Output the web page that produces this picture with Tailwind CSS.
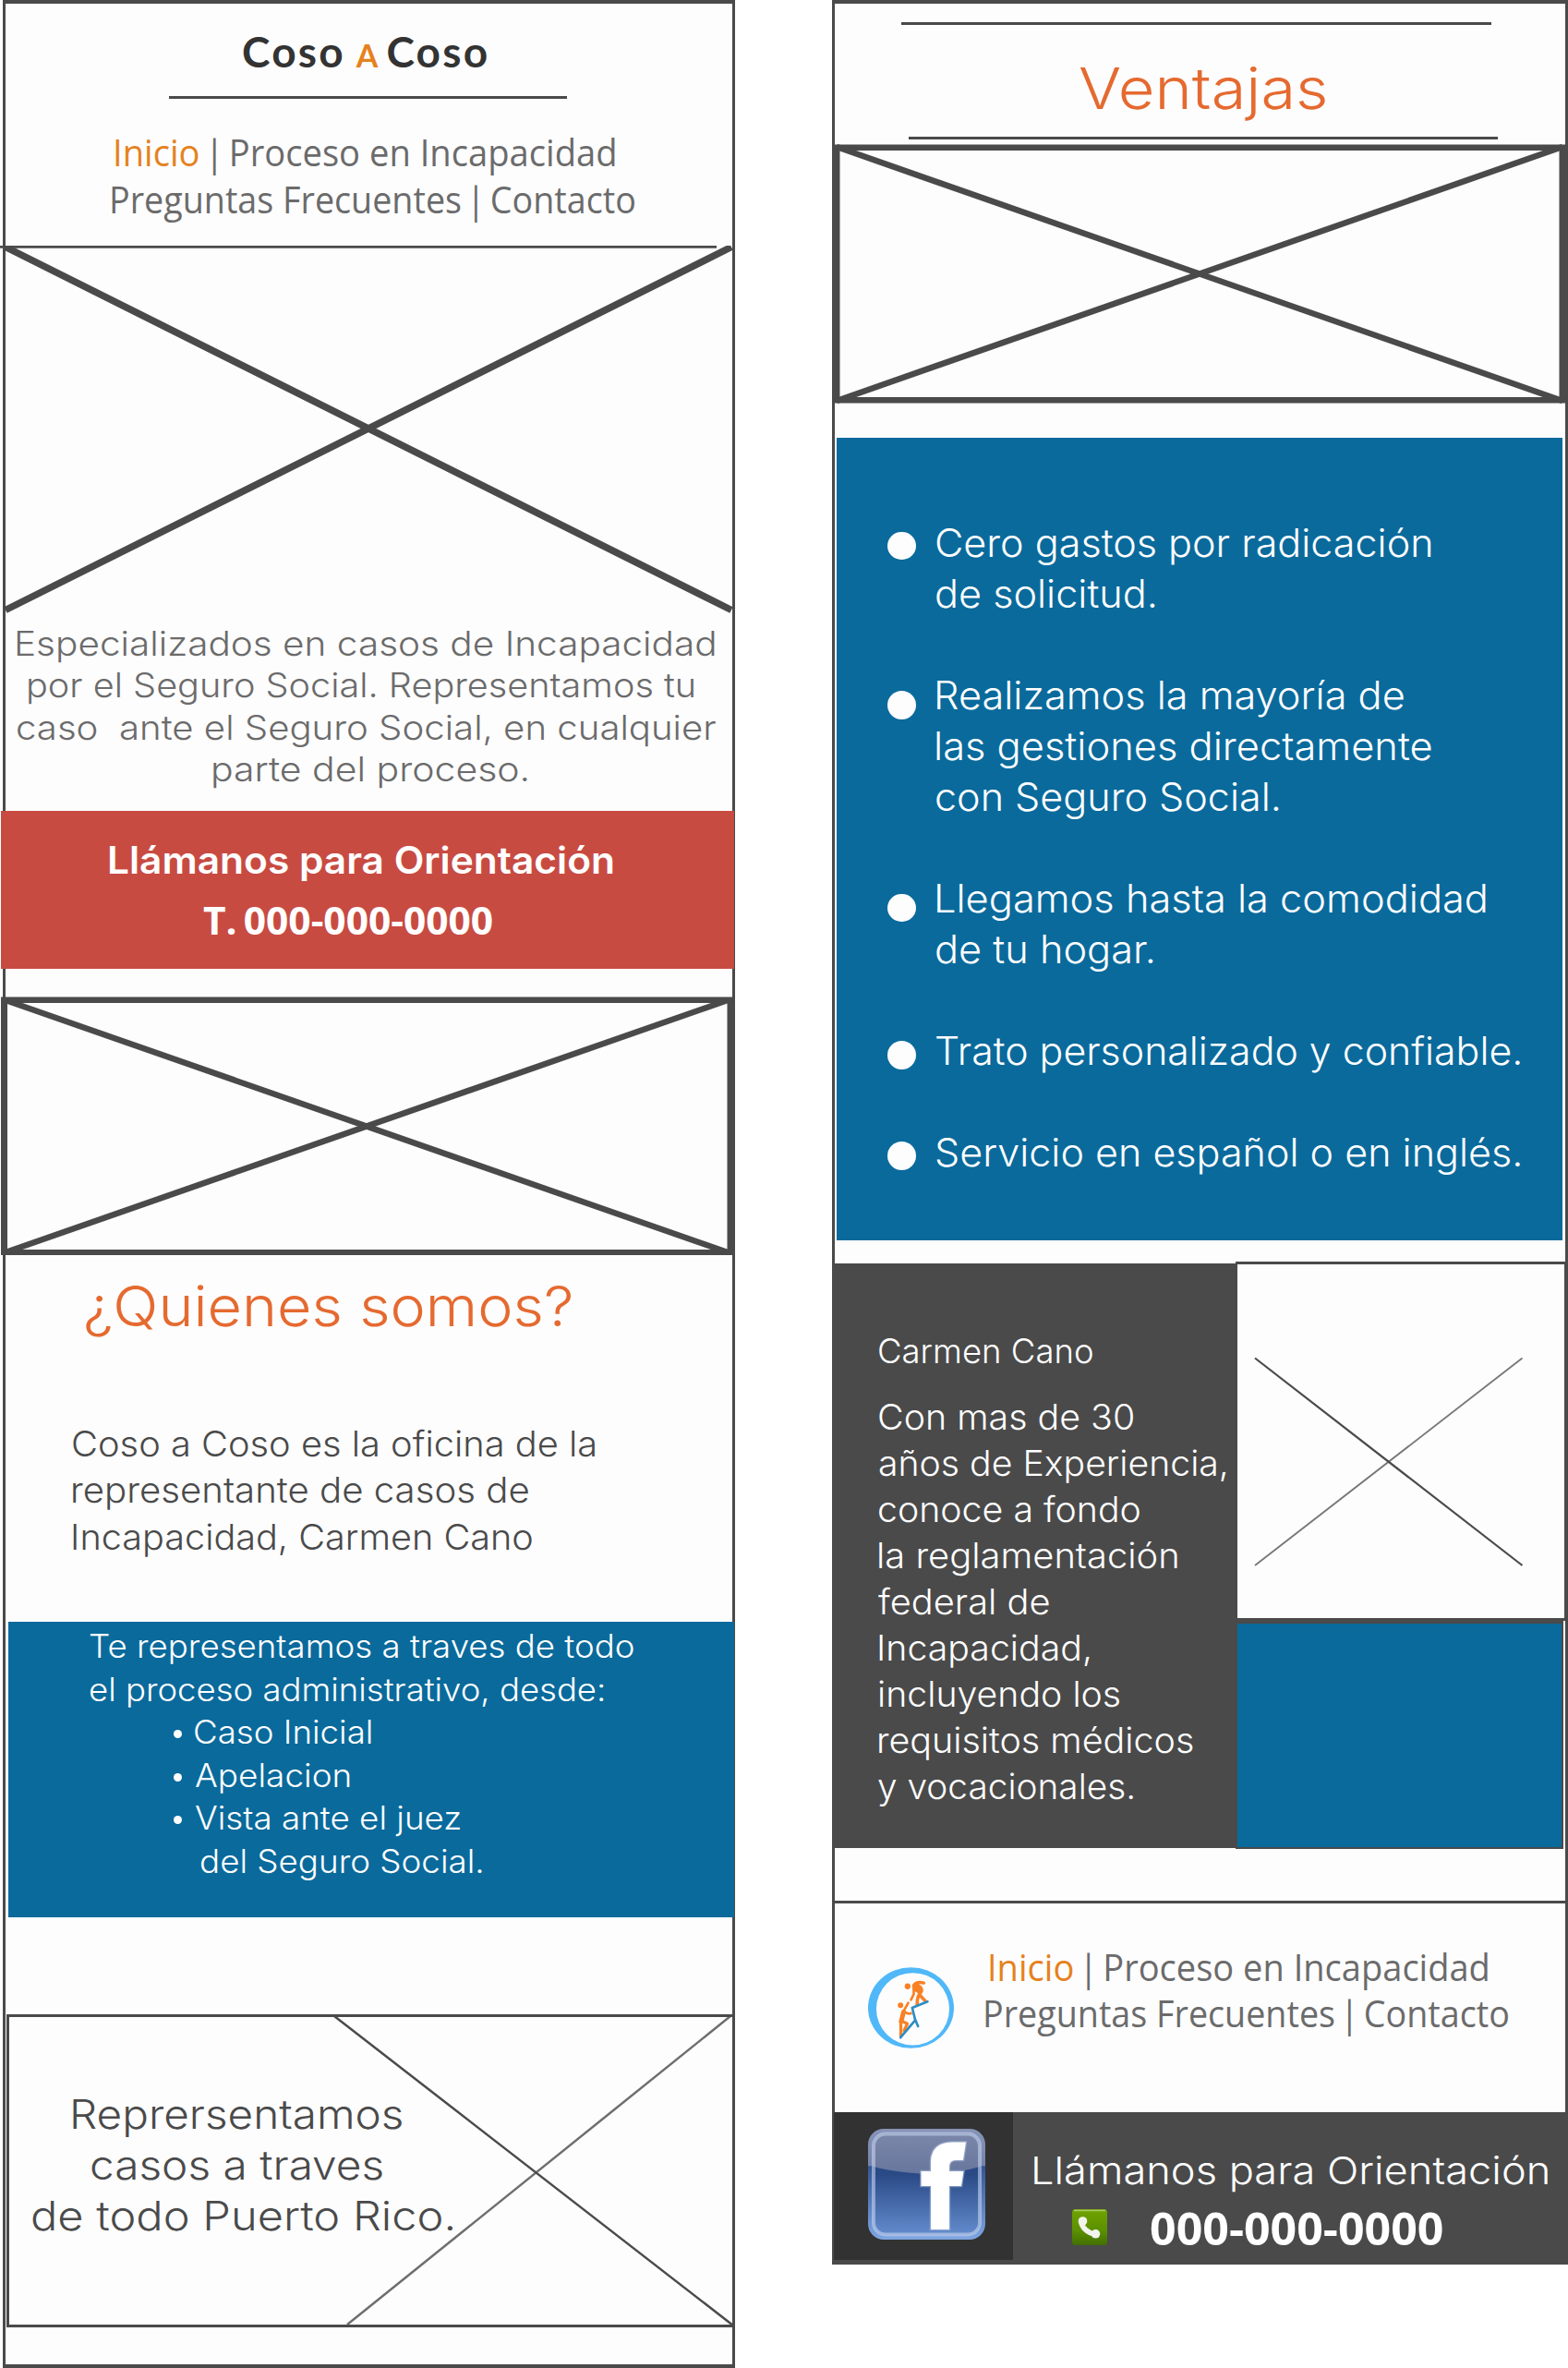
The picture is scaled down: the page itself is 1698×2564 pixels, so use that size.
<!DOCTYPE html>
<html lang="es">
<head>
<meta charset="utf-8">
<title>Coso a Coso</title>
<script src="https://cdn.jsdelivr.net/npm/@tailwindcss/browser@4"></script>
</head>
<body class="bg-white">
<div class="flex h-[2564px] w-[1698px] items-start gap-[105px] overflow-hidden font-light font-['Inter',sans-serif] whitespace-nowrap">

  <!-- First screen -->
  <section class="relative isolate flex h-[2564px] w-[796px] shrink-0 flex-col">
    <div class="absolute inset-y-0 right-0 left-[3px] -z-10 border-x-[3px] border-y-4 border-[#4a4a4a] bg-[#fdfdfe]"></div>

    <header class="h-[266px] pt-[25.5px]">
      <h1 class="ml-[262px] flex h-[60px] items-baseline text-[46px] leading-[60px] font-bold text-[#333] font-['Lato',sans-serif]">
        <span class="tracking-[2.2px]">Coso</span>
        <span class="ml-[12px] text-[34px] text-[#e5821e]">A</span>
        <span class="ml-[9px] tracking-[2.2px]">Coso</span>
      </h1>
      <div class="mt-[18.5px] ml-[183px] h-[3px] w-[431px] bg-[#4a4a4a]"></div>
      <nav class="mt-[33px] text-[39.5px] leading-[51px] font-normal text-[#6b6b6b] font-['Open_Sans',sans-serif]">
        <div class="ml-[122px] w-max origin-left scale-x-[.966]"><a class="text-[#e5821e]">Inicio</a> <span class="-mx-[5px]">|</span> <a>Proceso en Incapacidad</a></div>
        <div class="ml-[118px] w-max origin-left scale-x-[.954]"><a>Preguntas Frecuentes</a> <span class="-mx-[5px]">|</span> <a>Contacto</a></div>
      </nav>
    </header>

    <div class="h-[399px]">
      <svg class="block" width="796" height="399" viewBox="0 266 796 399" stroke="#4a4a4a">
        <path d="M0 267.3H776" stroke-width="3"/>
        <path d="M6 267.5L792 660.5M792 267.5L6 660.5" stroke-width="7.5"/>
      </svg>
    </div>

    <div class="h-[213px] pt-[8.7px] text-[37px] leading-[45.6px] text-[#6b6b6b]">
      <p class="ml-[15px] w-max origin-left scale-x-[1.095]">Especializados en casos de Incapacidad</p>
      <p class="ml-[28px] w-max origin-left scale-x-[1.071]">por el Seguro Social. Representamos tu</p>
      <p class="ml-[17px] w-max origin-left scale-x-[1.085]">caso&nbsp; ante el Seguro Social, en cualquier</p>
      <p class="ml-[228px] w-max origin-left scale-x-[1.107]">parte del proceso.</p>
    </div>

    <div class="ml-px h-[171px] w-[794px] bg-[#c84b42] pt-[23.5px] leading-[60px] text-white">
      <p class="ml-[115px] w-max origin-left scale-x-[1.048] text-[40.5px] font-semibold">Llámanos para Orientación</p>
      <p class="mt-[4.7px] ml-[219px] w-max origin-left scale-x-[1.012] text-[42px] font-bold font-['Open_Sans',sans-serif]">T. <span class="-ml-[4px]">000-000-0000</span></p>
    </div>

    <div class="mt-[30px] ml-px h-[280px] w-[795px]">
      <svg class="block" width="795" height="280" viewBox="1 1079 795 280">
        <path d="M1 1079.5H796V1359H1ZM8 1086V1353H787.5V1086Z" fill="#4a4a4a" fill-rule="evenodd"/>
        <path d="M6 1083L788 1356M788 1083L6 1356" stroke="#4a4a4a" stroke-width="6.5"/>
      </svg>
    </div>

    <div class="h-[397px] pt-[15.3px]">
      <h2 class="ml-[90px] w-max origin-left scale-x-[1.06] text-[61px] leading-[80px] text-[#e56a30]">¿Quienes somos?</h2>
      <div class="mt-[83.5px] text-[38.5px] leading-[50.4px] text-[#4a4a4a]">
        <p class="ml-[77px] w-max origin-left scale-x-[1.034]">Coso a Coso es la oficina de la</p>
        <p class="ml-[76px] w-max origin-left scale-x-[1.043]">representante de casos de</p>
        <p class="ml-[76px] w-max origin-left scale-x-[1.029]">Incapacidad, Carmen Cano</p>
      </div>
    </div>

    <div class="ml-[9px] h-[320px] w-[786px] bg-[#0a6a9c] pt-[3px] text-[35px] leading-[46.5px] text-white">
      <p class="ml-[87px] w-max origin-left scale-x-[1.047]">Te representamos a traves de todo</p>
      <p class="ml-[87px] w-max origin-left scale-x-[1.043]">el proceso administrativo, desde:</p>
      <ul>
        <li class="ml-[179px] flex items-center"><span class="mt-[5px] mr-[12px] size-[9px] rounded-full bg-white"></span><span class="origin-left scale-x-[1.048]">Caso Inicial</span></li>
        <li class="ml-[179px] flex items-center"><span class="mt-[5px] mr-[14px] size-[9px] rounded-full bg-white"></span><span class="origin-left scale-x-[1.055]">Apelacion</span></li>
        <li class="ml-[179px] flex items-center"><span class="mt-[5px] mr-[14px] size-[9px] rounded-full bg-white"></span><span class="origin-left scale-x-[1.05]">Vista ante el juez</span></li>
        <li class="ml-[207px] w-max origin-left scale-x-[1.05]">del Seguro Social.</li>
      </ul>
    </div>

    <div class="relative mt-[105px] ml-[7px] h-[339px] w-[789px] border-[3px] border-r-0 border-[#4a4a4a]">
      <svg class="absolute inset-0" width="786" height="333" viewBox="10 2184 786 333" fill="none" stroke-width="2.5">
        <path d="M376 2517L791 2183" stroke="#6e6e6e"/>
        <path d="M362 2183L794 2518" stroke="#4a4a4a"/>
      </svg>
      <div class="relative pt-[77.5px] text-[44px] leading-[55px] text-[#4a4a4a]">
        <p class="ml-[65px] w-max origin-left scale-x-[1.083]">Reprersentamos</p>
        <p class="ml-[87px] w-max origin-left scale-x-[1.086]">casos a traves</p>
        <p class="ml-[23px] w-max origin-left scale-x-[1.108]">de todo Puerto Rico.</p>
      </div>
    </div>
  </section>

  <!-- Second screen -->
  <section class="relative isolate flex h-[2452px] w-[797px] shrink-0 flex-col">
    <div class="absolute inset-0 -z-10 border-x-[3.5px] border-t-4 border-[#4a4a4a] bg-[#fdfdfe]"></div>

    <header class="h-[156px] pt-[24px]">
      <div class="ml-[75px] h-[3px] w-[639px] bg-[#4a4a4a]"></div>
      <h2 class="mt-[28.5px] ml-[267px] w-max origin-left scale-x-[1.106] text-[62px] leading-[80px] text-[#e56a30]">Ventajas</h2>
      <div class="mt-[12.5px] ml-[83px] h-[3px] w-[638px] bg-[#4a4a4a]"></div>
    </header>

    <div class="h-[318px]">
      <svg class="block" width="797" height="281" viewBox="901 156 797 281">
        <path d="M902 156.5H1696V436.5H902ZM909.5 163V430H1688.5V163Z" fill="#4a4a4a" fill-rule="evenodd"/>
        <path d="M906 159L1692 434M1692 159L906 434" stroke="#4a4a4a" stroke-width="6.5"/>
      </svg>
    </div>

    <ul class="ml-[5px] flex h-[869px] w-[786px] flex-col gap-[55px] bg-[#0a6a9c] pt-[86.2px] pl-[55px] text-[42px] leading-[55px] text-white">
      <li class="flex items-start">
        <span class="mt-[15.5px] mr-[20px] h-[30.5px] w-[31px] shrink-0 rounded-full bg-[#fdfdfe]"></span>
        <div><p class="w-max origin-left scale-x-[1.026]">Cero gastos por radicación</p><p class="w-max origin-left scale-x-[1.028]">de solicitud.</p></div>
      </li>
      <li class="flex items-start">
        <span class="mt-[23px] mr-[19px] h-[30.5px] w-[31px] shrink-0 rounded-full bg-[#fdfdfe]"></span>
        <div><p class="w-max origin-left scale-x-[1.031]">Realizamos la mayoría de</p><p class="w-max origin-left scale-x-[1.034]">las gestiones directamente</p><p class="ml-px w-max origin-left scale-x-[1.026]">con Seguro Social.</p></div>
      </li>
      <li class="flex items-start">
        <span class="mt-[22.5px] mr-[19px] h-[30.5px] w-[31px] shrink-0 rounded-full bg-[#fdfdfe]"></span>
        <div><p class="w-max origin-left scale-x-[1.033]">Llegamos hasta la comodidad</p><p class="ml-px w-max origin-left scale-x-[1.031]">de tu hogar.</p></div>
      </li>
      <li class="flex items-start">
        <span class="mt-[17px] mr-[20px] h-[30.5px] w-[31px] shrink-0 rounded-full bg-[#fdfdfe]"></span>
        <p class="w-max origin-left scale-x-[1.02]">Trato personalizado y confiable.</p>
      </li>
      <li class="flex items-start">
        <span class="mt-[16px] mr-[20px] h-[30.5px] w-[31px] shrink-0 rounded-full bg-[#fdfdfe]"></span>
        <p class="w-max origin-left scale-x-[1.025]">Servicio en español o en inglés.</p>
      </li>
    </ul>

    <div class="mt-[23px] flex h-[636px]">
      <div class="mt-[1.5px] h-[633.5px] w-[437px] bg-[#4a4a4a] pt-[70.8px] text-[38.5px] leading-[50.05px] text-white">
        <p class="mb-[20.7px] ml-[49px] w-max origin-left text-[36.5px]">Carmen Cano</p>
        <p class="ml-[49px] w-max origin-left scale-x-[1.022]">Con mas de 30</p>
        <p class="ml-[50px] w-max origin-left scale-x-[1.018]">años de Experiencia,</p>
        <p class="ml-[49px] w-max origin-left scale-x-[1.02]">conoce a fondo</p>
        <p class="ml-[48px] w-max origin-left scale-x-[1.036]">la reglamentación</p>
        <p class="ml-[50px] w-max origin-left scale-x-[1.034]">federal de</p>
        <p class="ml-[48px] w-max origin-left scale-x-[1.02]">Incapacidad,</p>
        <p class="ml-[49px] w-max origin-left scale-x-[1.02]">incluyendo los</p>
        <p class="ml-[48px] w-max origin-left scale-x-[1.024]">requisitos médicos</p>
        <p class="ml-[49px] w-max origin-left scale-x-[1.008]">y vocacionales.</p>
      </div>
      <div class="w-[360px]">
        <div class="h-[389px] border-y-[3px] border-x-2 border-r-4 border-[#4a4a4a] bg-[#fdfdfe]">
          <svg class="block" width="354" height="383" viewBox="1340 1369 354 383" fill="none">
            <path d="M1648.5 1470.5L1359 1695" stroke="#777" stroke-width="1.8"/>
            <path d="M1359 1470.5L1648.5 1695" stroke="#4a4a4a" stroke-width="2.2"/>
          </svg>
        </div>
        <div class="h-[247px] w-[355px] border-2 border-t-[3px] border-[#4a4a4a] bg-[#0a6a9c]"></div>
      </div>
    </div>

    <div class="mt-[56px] flex h-[229px] border-t-[3px] border-[#4a4a4a]">
      <svg class="mt-[69px] ml-[39px] shrink-0" width="93" height="88" viewBox="60 60 280 264" fill="none" stroke-linecap="round" stroke-linejoin="round">
        <path d="M60 192A140 132 0 0 1 340 192A140 132 0 0 1 60 192ZM87 196A119 118 0 0 0 325 196A119 118 0 0 0 87 196Z" fill="#50b8f8" fill-rule="evenodd"/>
        <g stroke="#f98125">
          <circle cx="189" cy="122" r="9.5" fill="#f98125" stroke="none"/>
          <path d="M208 120Q218 105 242 111" stroke-width="10"/>
          <path d="M209 116Q217 108 232 122Q244 136 230 146L208 132Z" fill="#f98125" stroke-width="5"/>
          <path d="M209 120L209 148L200 166" stroke-width="8"/>
          <path d="M233 140Q220 152 220 180M228 150L247 170" stroke-width="11"/>
          <circle cx="166" cy="184" r="9" fill="#f98125" stroke="none"/>
          <path d="M176 203L191 176M178 204Q190 214 200 210" stroke-width="8"/>
          <path d="M176 205L168 236" stroke-width="15"/>
          <path d="M167 236L167 284M172 236L188 244L178 266" stroke-width="10"/>
        </g>
        <path d="M254 172L204 192L214 232L166 289M212 226L223 252" stroke="#2d8cc4" stroke-width="8"/>
      </svg>
      <nav class="mt-[43.8px] text-[39.5px] leading-[50.4px] font-normal text-[#6b6b6b] font-['Open_Sans',sans-serif]">
        <div class="ml-[36px] w-max origin-left scale-x-[.963]"><a class="text-[#e5821e]">Inicio</a> <span class="-mx-[5px]">|</span> <a>Proceso en Incapacidad</a></div>
        <div class="ml-[31px] w-max origin-left scale-x-[.954]"><a>Preguntas Frecuentes</a> <span class="-mx-[5px]">|</span> <a>Contacto</a></div>
      </nav>
    </div>

    <footer class="flex h-[165px] bg-[#4a4a4a] text-white">
      <div class="ml-[2px] flex h-[160px] w-[194px] shrink-0 bg-[#323232] pt-[18px] pl-[37px]">
        <svg width="127" height="120" viewBox="0 0 127 120">
          <defs>
            <linearGradient id="fb" x1="0" y1="0" x2="0" y2="1">
              <stop offset="0" stop-color="#2a4a86"/><stop offset=".4" stop-color="#2a4a86"/><stop offset="1" stop-color="#638bcd"/>
            </linearGradient>
            <linearGradient id="rim" x1="0" y1="0" x2="0" y2="1">
              <stop offset="0" stop-color="#8794b8"/><stop offset=".33" stop-color="#7684ac"/><stop offset=".34" stop-color="#345595"/><stop offset="1" stop-color="#7ea6e2"/>
            </linearGradient>
            <linearGradient id="gloss" x1="0" y1="0" x2="0" y2="1">
              <stop offset="0" stop-color="#7b87a9"/><stop offset="1" stop-color="#67769d"/>
            </linearGradient>
          </defs>
          <rect width="127" height="120" rx="17" fill="url(#rim)"/>
          <rect x="6" y="5.500" width="115" height="109" rx="13" fill="url(#fb)"/>
          <path d="M6 18.500a13 13 0 0 1 13-13h89a13 13 0 0 1 13 13V41Q98 48 64 49Q28 47 6 41Z" fill="url(#gloss)"/>
          <rect x="6" y="5.500" width="115" height="109" rx="13" fill="none" stroke="#c4d2ec" stroke-opacity=".6" stroke-width="4"/>
          <path d="M68 109V62H57.500V46H68V36Q68 14.500 92 14.500H106L103 34H95Q88 34 88 41V46H103.500L101 62H88V109Z" fill="#fff" stroke="#a9b9da" stroke-opacity=".6" stroke-width="2.500" paint-order="stroke"/>
        </svg>
      </div>
      <div class="pt-[38px]">
        <p class="ml-[18.700px] w-max origin-left scale-x-[1.103] text-[41px] leading-[50px]">Llámanos para Orientación</p>
        <div class="mt-[8px] ml-[64px] flex items-start">
          <svg class="mt-[9px] shrink-0" width="38" height="39" viewBox="0 0 38 39">
            <defs><linearGradient id="ph" x1="0" y1="0" x2="0" y2="1"><stop offset="0" stop-color="#71a300"/><stop offset=".6" stop-color="#5b9000"/><stop offset="1" stop-color="#426f00"/></linearGradient></defs>
            <rect width="38" height="39" rx="3.500" fill="url(#ph)"/>
            <path d="M2.500 1.500H35.500" stroke="#a9c96a" stroke-width="1.500" stroke-linecap="round"/>
            <path d="M9.500 13Q11.500 24 25 27.500" fill="none" stroke="#f2f4ee" stroke-width="5.500"/>
            <circle cx="11.500" cy="13" r="4.800" fill="#f2f4ee"/>
            <circle cx="25.500" cy="26.800" r="4.800" fill="#f2f4ee"/>
          </svg>
          <p class="ml-[46px] w-max origin-left scale-x-[1.043] text-[48px] leading-[60px] font-bold font-['Open_Sans',sans-serif]">000-000-0000</p>
        </div>
      </div>
    </footer>
  </section>
</div>
</body>
</html>
